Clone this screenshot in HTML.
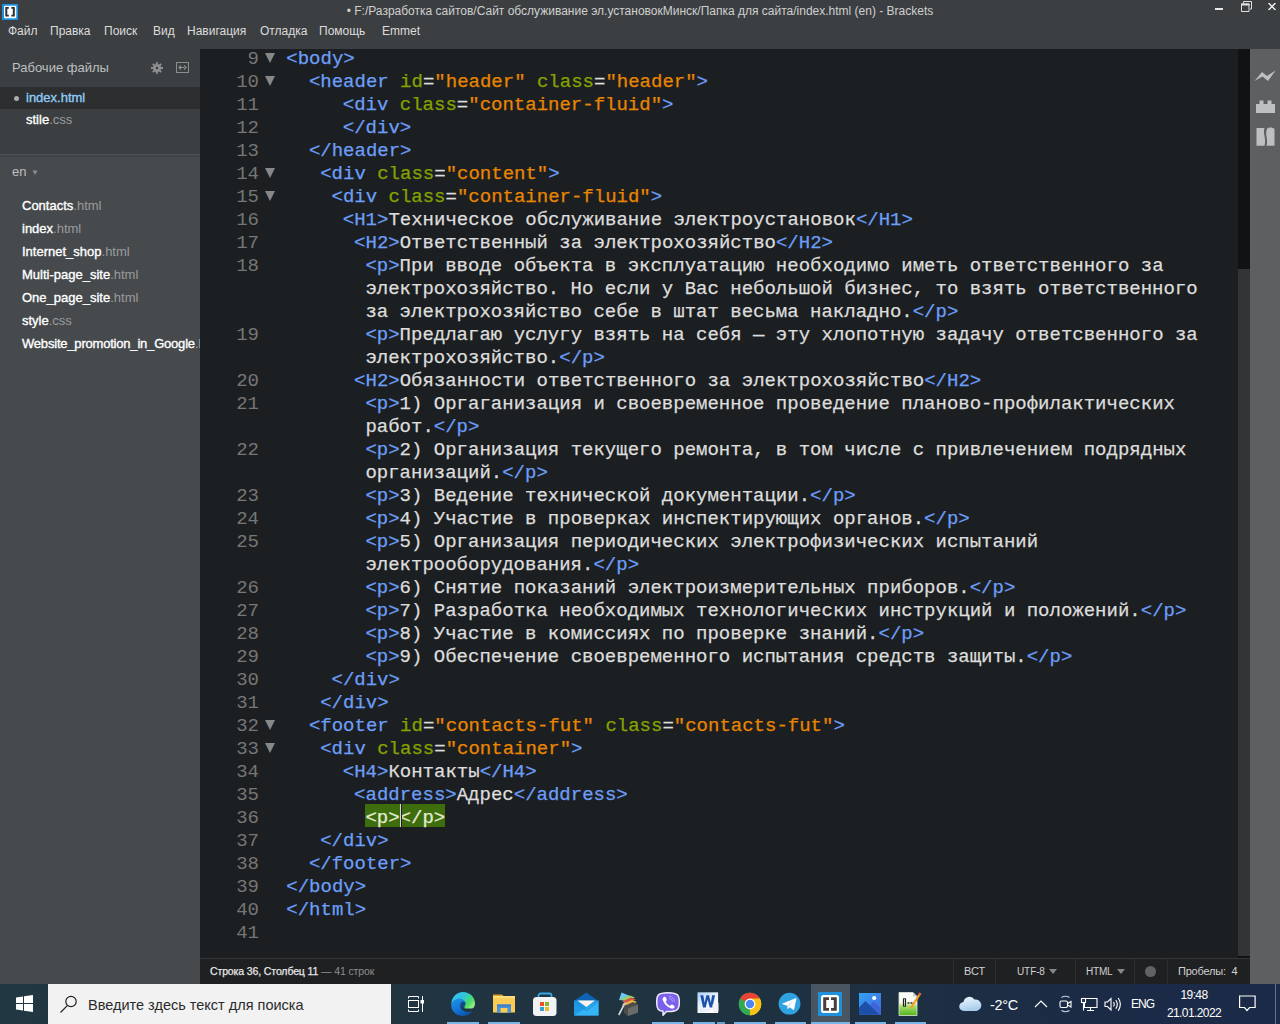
<!DOCTYPE html>
<html lang="ru">
<head>
<meta charset="utf-8">
<title>Brackets</title>
<style>
*{box-sizing:border-box;margin:0;padding:0}
html,body{width:1280px;height:1024px;overflow:hidden;background:#1c1f21;font-family:"Liberation Sans",sans-serif}
.abs{position:absolute}
#titlebar{position:absolute;left:0;top:0;width:1280px;height:49px;background:#3c3f41}
#title{position:absolute;left:0;width:1280px;top:3px;text-align:center;font-size:12px;color:#cfcfcf;line-height:16px}
.menu{position:absolute;top:23px;font-size:12px;color:#dcdcdc;line-height:16px;white-space:nowrap}
#sidebar{position:absolute;left:0;top:49px;width:200px;height:935px;background:#464a4d;overflow:hidden}
#wf{position:absolute;left:0;top:0;width:200px;height:108px;background:#3b3f42;border-bottom:2px solid #404346;box-shadow:inset 0 -1px 0 #4e5255}
#wfsel{position:absolute;left:0;top:38px;width:200px;height:22px;background:#2d2e30}
.sb{position:absolute;font-size:13px;line-height:16px;color:#fff;white-space:nowrap;-webkit-text-stroke:0.35px #fff}
.sb b{font-weight:normal;color:#9a9c9d;-webkit-text-stroke:0}
#editor{position:absolute;left:200px;top:49px;width:1050px;height:909px;background:#1c1f21;overflow:hidden}
#codewrap{position:absolute;left:-200px;top:-49px;width:1280px;height:1024px}
.ln{position:absolute;left:200px;width:59px;text-align:right;font-family:"Liberation Mono",monospace;font-size:19px;line-height:23px;color:#767676}
.fold{position:absolute;left:265px;width:0;height:0;border-left:5.5px solid transparent;border-right:5.5px solid transparent;border-top:10px solid #858788}
.cl{position:absolute;font-family:"Liberation Mono",monospace;font-size:19px;line-height:23px;white-space:pre;color:#ddd;-webkit-text-stroke:0.25px currentColor}
.t{color:#6c9ef8}.a{color:#85a300}.s{color:#e88501}.x{color:#ddd}
.m{color:#e4ecd2}
.hl{position:absolute;height:23px;background:#3d6d0d}
.cur{display:inline-block;position:relative;z-index:2;top:-3px;width:1px;height:23px;background:#d8d8d8;vertical-align:top;margin-top:0;margin-right:-1px;box-shadow:1px 0 0 #1d1f21}
#vscroll{position:absolute;left:1238px;top:49px;width:12px;height:909px;background:#111213}
#vthumb{position:absolute;left:0;top:220px;width:12px;height:687px;background:#333435}
#rtool{position:absolute;left:1250px;top:49px;width:30px;height:935px;background:#5d5f60}
#status{position:absolute;left:200px;top:958px;width:1050px;height:26px;background:#1f2022;border-top:1px solid #343537}
.st{position:absolute;top:6px;font-size:11px;line-height:13px;color:#d0d0d0;white-space:nowrap}
.tri{position:absolute;width:0;height:0;border-left:4px solid transparent;border-right:4px solid transparent;border-top:5px solid #858788}
.sep{position:absolute;top:0;width:1px;height:26px;background:#2c2d2f}
#taskbar{position:absolute;left:0;top:984px;width:1280px;height:40px;background:linear-gradient(90deg,#213742 0%,#1f3340 50%,#1d2f42 70%,#1b2b46 85%,#1b2a48 100%)}
#search{position:absolute;left:48px;top:0;width:343px;height:40px;background:#f2f2f2}
#search span{position:absolute;left:40px;top:12px;font-size:14.5px;line-height:18px;color:#2b2b2b}
.ul{position:absolute;top:38px;height:2px;background:#79b5e6}
.tray{position:absolute;color:#fff;font-size:14px;line-height:16px;white-space:nowrap}
</style>
</head>
<body>
<div id="titlebar">
  <svg class="abs" style="left:2px;top:4px" width="16" height="16" viewBox="0 0 16 16"><rect width="16" height="16" fill="#1f8fe0"/><rect x="2" y="1.800" width="12.300" height="12.400" rx="1.200" fill="#fff"/><path d="M3.300 3h3.500v1.800H5.300v5.900h1.500v1.800H3.300z" fill="#2a2f38"/><path d="M12.800 3H9.300v1.800h1.500v5.900H9.300v1.800h3.500z" fill="#2a2f38"/></svg>
  <div id="title">• F:/Разработка сайтов/Сайт обслуживание эл.установокМинск/Папка для сайта/index.html (en) - Brackets</div>
  <div class="abs" style="left:1215px;top:8px;width:8px;height:2px;background:#e6e6e6"></div>
  <svg class="abs" style="left:1241px;top:1px" width="11" height="11" viewBox="0 0 11 11" fill="none" stroke="#e0e0e0" stroke-width="1"><path d="M0.500 3v7.500h7.500V3z"/><path d="M0 3.500h8.500" stroke-width="2"/><path d="M2.500 2V0.500h8V8H9"/></svg>
  <svg class="abs" style="left:1268px;top:3px" width="8" height="7" viewBox="0 0 8 7" stroke="#f0f0f0" stroke-width="1.500"><path d="M0.500 0l7 7M7.500 0l-7 7"/></svg>
  <div class="menu" style="left:8px">Файл</div>
  <div class="menu" style="left:50px">Правка</div>
  <div class="menu" style="left:104px">Поиск</div>
  <div class="menu" style="left:153px">Вид</div>
  <div class="menu" style="left:187px">Навигация</div>
  <div class="menu" style="left:260px">Отладка</div>
  <div class="menu" style="left:319px">Помощь</div>
  <div class="menu" style="left:382px">Emmet</div>
</div>

<div id="sidebar">
  <div id="wf">
    <div class="sb" style="left:12px;top:11px;font-size:13px;color:#bdbfc0;-webkit-text-stroke:0">Рабочие файлы</div>
    <svg class="abs" style="left:151px;top:13px" width="12" height="12" viewBox="0 0 12 12"><circle cx="6" cy="6" r="2.700" fill="none" stroke="#8c8e8f" stroke-width="2.800"/><g stroke="#8c8e8f" stroke-width="1.800"><path d="M6 0v2.200M6 9.800V12M0 6h2.200M9.800 6H12M1.800 1.800l1.500 1.500M8.700 8.700l1.500 1.500M10.200 1.800L8.700 3.300M3.300 8.700l-1.500 1.500"/></g></svg>
    <svg class="abs" style="left:176px;top:13px" width="13" height="11" viewBox="0 0 13 11"><rect x="0.500" y="0.500" width="12" height="10" fill="none" stroke="#8c8e8f" stroke-width="1"/><path d="M2 5.500l3-2.500v5zM11 5.500l-3-2.500v5zM4 5h5v1H4z" fill="#8c8e8f"/></svg>
    <div id="wfsel"></div>
    <div class="abs" style="left:14px;top:47px;width:5px;height:5px;border-radius:50%;background:#a9abac"></div>
    <div class="sb" style="left:26px;top:41px;color:#8fcbf5;-webkit-text-stroke:0.35px #8fcbf5">index.html</div>
    <div class="sb" style="left:26px;top:63px">stile<b>.css</b></div>
  </div>
  <div class="sb" style="left:12px;top:115px;color:#bdbfc0;-webkit-text-stroke:0">en <span style="font-size:8px;color:#8c8e8f;position:relative;top:-1px;left:1px">▼</span></div>
  <div class="sb" style="left:22px;top:149px">Contacts<b>.html</b></div>
  <div class="sb" style="left:22px;top:172px">index<b>.html</b></div>
  <div class="sb" style="left:22px;top:195px">Internet_shop<b>.html</b></div>
  <div class="sb" style="left:22px;top:218px">Multi-page_site<b>.html</b></div>
  <div class="sb" style="left:22px;top:241px">One_page_site<b>.html</b></div>
  <div class="sb" style="left:22px;top:264px">style<b>.css</b></div>
  <div class="sb" style="left:22px;top:287px;letter-spacing:-0.2px">Website_promotion_in_Google<b>.html</b></div>
</div>

<div id="editor"><div id="codewrap">
<div class="ln" style="top:48px">9</div>
<div class="fold" style="top:53px"></div>
<div class="cl" style="top:48px;left:286.3px"><span class="t">&lt;body&gt;</span></div>
<div class="ln" style="top:71px">10</div>
<div class="fold" style="top:76px"></div>
<div class="cl" style="top:71px;left:308.9px"><span class="t">&lt;header </span><span class="a">id</span><span class="x">=</span><span class="s">"header"</span><span class="x"> </span><span class="a">class</span><span class="x">=</span><span class="s">"header"</span><span class="t">&gt;</span></div>
<div class="ln" style="top:94px">11</div>
<div class="cl" style="top:94px;left:342.8px"><span class="t">&lt;div </span><span class="a">class</span><span class="x">=</span><span class="s">"container-fluid"</span><span class="t">&gt;</span></div>
<div class="ln" style="top:117px">12</div>
<div class="cl" style="top:117px;left:342.8px"><span class="t">&lt;/div&gt;</span></div>
<div class="ln" style="top:140px">13</div>
<div class="cl" style="top:140px;left:308.9px"><span class="t">&lt;/header&gt;</span></div>
<div class="ln" style="top:163px">14</div>
<div class="fold" style="top:168px"></div>
<div class="cl" style="top:163px;left:320.2px"><span class="t">&lt;div </span><span class="a">class</span><span class="x">=</span><span class="s">"content"</span><span class="t">&gt;</span></div>
<div class="ln" style="top:186px">15</div>
<div class="fold" style="top:191px"></div>
<div class="cl" style="top:186px;left:331.5px"><span class="t">&lt;div </span><span class="a">class</span><span class="x">=</span><span class="s">"container-fluid"</span><span class="t">&gt;</span></div>
<div class="ln" style="top:209px">16</div>
<div class="cl" style="top:209px;left:342.8px"><span class="t">&lt;H1&gt;</span><span class="x">Техническое обслуживание электроустановок</span><span class="t">&lt;/H1&gt;</span></div>
<div class="ln" style="top:232px">17</div>
<div class="cl" style="top:232px;left:354.1px"><span class="t">&lt;H2&gt;</span><span class="x">Ответственный за электрохозяйство</span><span class="t">&lt;/H2&gt;</span></div>
<div class="ln" style="top:255px">18</div>
<div class="cl" style="top:255px;left:365.4px"><span class="t">&lt;p&gt;</span><span class="x">При вводе объекта в эксплуатацию необходимо иметь ответственного за</span></div>
<div class="cl" style="top:278px;left:365.4px"><span class="x">электрохозяйство. Но если у Вас небольшой бизнес, то взять ответственного</span></div>
<div class="cl" style="top:301px;left:365.4px"><span class="x">за электрохозяйство себе в штат весьма накладно.</span><span class="t">&lt;/p&gt;</span></div>
<div class="ln" style="top:324px">19</div>
<div class="cl" style="top:324px;left:365.4px"><span class="t">&lt;p&gt;</span><span class="x">Предлагаю услугу взять на себя — эту хлопотную задачу ответсвенного за</span></div>
<div class="cl" style="top:347px;left:365.4px"><span class="x">электрохозяйство.</span><span class="t">&lt;/p&gt;</span></div>
<div class="ln" style="top:370px">20</div>
<div class="cl" style="top:370px;left:354.1px"><span class="t">&lt;H2&gt;</span><span class="x">Обязанности ответственного за электрохозяйство</span><span class="t">&lt;/H2&gt;</span></div>
<div class="ln" style="top:393px">21</div>
<div class="cl" style="top:393px;left:365.4px"><span class="t">&lt;p&gt;</span><span class="x">1) Оргаганизация и своевременное проведение планово-профилактических</span></div>
<div class="cl" style="top:416px;left:365.4px"><span class="x">работ.</span><span class="t">&lt;/p&gt;</span></div>
<div class="ln" style="top:439px">22</div>
<div class="cl" style="top:439px;left:365.4px"><span class="t">&lt;p&gt;</span><span class="x">2) Организация текущего ремонта, в том числе с привлечением подрядных</span></div>
<div class="cl" style="top:462px;left:365.4px"><span class="x">организаций.</span><span class="t">&lt;/p&gt;</span></div>
<div class="ln" style="top:485px">23</div>
<div class="cl" style="top:485px;left:365.4px"><span class="t">&lt;p&gt;</span><span class="x">3) Ведение технической документации.</span><span class="t">&lt;/p&gt;</span></div>
<div class="ln" style="top:508px">24</div>
<div class="cl" style="top:508px;left:365.4px"><span class="t">&lt;p&gt;</span><span class="x">4) Участие в проверках инспектирующих органов.</span><span class="t">&lt;/p&gt;</span></div>
<div class="ln" style="top:531px">25</div>
<div class="cl" style="top:531px;left:365.4px"><span class="t">&lt;p&gt;</span><span class="x">5) Организация периодических электрофизических испытаний</span></div>
<div class="cl" style="top:554px;left:365.4px"><span class="x">электрооборудования.</span><span class="t">&lt;/p&gt;</span></div>
<div class="ln" style="top:577px">26</div>
<div class="cl" style="top:577px;left:365.4px"><span class="t">&lt;p&gt;</span><span class="x">6) Снятие показаний электроизмерительных приборов.</span><span class="t">&lt;/p&gt;</span></div>
<div class="ln" style="top:600px">27</div>
<div class="cl" style="top:600px;left:365.4px"><span class="t">&lt;p&gt;</span><span class="x">7) Разработка необходимых технологических инструкций и положений.</span><span class="t">&lt;/p&gt;</span></div>
<div class="ln" style="top:623px">28</div>
<div class="cl" style="top:623px;left:365.4px"><span class="t">&lt;p&gt;</span><span class="x">8) Участие в комиссиях по проверке знаний.</span><span class="t">&lt;/p&gt;</span></div>
<div class="ln" style="top:646px">29</div>
<div class="cl" style="top:646px;left:365.4px"><span class="t">&lt;p&gt;</span><span class="x">9) Обеспечение своевременного испытания средств защиты.</span><span class="t">&lt;/p&gt;</span></div>
<div class="ln" style="top:669px">30</div>
<div class="cl" style="top:669px;left:331.5px"><span class="t">&lt;/div&gt;</span></div>
<div class="ln" style="top:692px">31</div>
<div class="cl" style="top:692px;left:320.2px"><span class="t">&lt;/div&gt;</span></div>
<div class="ln" style="top:715px">32</div>
<div class="fold" style="top:720px"></div>
<div class="cl" style="top:715px;left:308.9px"><span class="t">&lt;footer </span><span class="a">id</span><span class="x">=</span><span class="s">"contacts-fut"</span><span class="x"> </span><span class="a">class</span><span class="x">=</span><span class="s">"contacts-fut"</span><span class="t">&gt;</span></div>
<div class="ln" style="top:738px">33</div>
<div class="fold" style="top:743px"></div>
<div class="cl" style="top:738px;left:320.2px"><span class="t">&lt;div </span><span class="a">class</span><span class="x">=</span><span class="s">"container"</span><span class="t">&gt;</span></div>
<div class="ln" style="top:761px">34</div>
<div class="cl" style="top:761px;left:342.8px"><span class="t">&lt;H4&gt;</span><span class="x">Контакты</span><span class="t">&lt;/H4&gt;</span></div>
<div class="ln" style="top:784px">35</div>
<div class="cl" style="top:784px;left:354.1px"><span class="t">&lt;address&gt;</span><span class="x">Адрес</span><span class="t">&lt;/address&gt;</span></div>
<div class="ln" style="top:807px">36</div>
<div class="hl" style="top:804px;left:365.0px;width:79.8px"></div>
<div class="cl" style="top:807px;left:365.4px"><span class="m">&lt;p&gt;</span><i class="cur"></i><span class="m">&lt;/p&gt;</span></div>
<div class="ln" style="top:830px">37</div>
<div class="cl" style="top:830px;left:320.2px"><span class="t">&lt;/div&gt;</span></div>
<div class="ln" style="top:853px">38</div>
<div class="cl" style="top:853px;left:308.9px"><span class="t">&lt;/footer&gt;</span></div>
<div class="ln" style="top:876px">39</div>
<div class="cl" style="top:876px;left:286.3px"><span class="t">&lt;/body&gt;</span></div>
<div class="ln" style="top:899px">40</div>
<div class="cl" style="top:899px;left:286.3px"><span class="t">&lt;/html&gt;</span></div>
<div class="ln" style="top:922px">41</div>
</div></div>

<div id="vscroll"><div id="vthumb"></div></div>

<div id="rtool">
  <svg class="abs" style="left:4px;top:20px" width="22" height="14" viewBox="0 0 22 14"><path d="M0.500 12L8 3l5 4L21.500 1.500 14 12 8.500 7.500z" fill="#bdbfc0"/></svg>
  <svg class="abs" style="left:6px;top:50px" width="19" height="14" viewBox="0 0 19 14"><path d="M0 5h3.500V1.500h4V5h4V1.500h4V5H19v9H0z" fill="#bdbfc0"/></svg>
  <svg class="abs" style="left:6px;top:78px" width="19" height="21" viewBox="0 0 19 19" preserveAspectRatio="none"><path d="M0.500 1h8c-2 5 2 9 0 16H0.500zM11 1.500c3-2 5-1 7.500 0V17h-8c2-6-2-10 0.500-15.500z" fill="#bdbfc0"/></svg>
</div>

<div id="status">
  <div class="st" style="left:10px;font-size:10.5px;letter-spacing:-0.12px"><span style="color:#e6e6e6;-webkit-text-stroke:0.25px #e6e6e6">Строка 36, Столбец 11</span><span style="color:#8d8f90"> — 41 строк</span></div>
  <div class="sep" style="left:753px"></div>
  <div class="st" style="left:764px">ВСТ</div>
  <div class="sep" style="left:795px"></div>
  <div class="st" style="left:817px;font-size:10px;letter-spacing:-0.1px">UTF-8</div><div class="tri" style="left:849px;top:10px"></div>
  <div class="sep" style="left:875px"></div>
  <div class="st" style="left:886px;font-size:10px;letter-spacing:-0.2px">HTML</div><div class="tri" style="left:917px;top:10px"></div>
  <div class="sep" style="left:934px"></div>
  <div class="abs" style="left:945px;top:7px;width:11px;height:11px;border-radius:50%;background:#606263"></div>
  <div class="sep" style="left:967px"></div>
  <div class="st" style="left:978px;letter-spacing:-0.2px">Пробелы:&nbsp; 4</div>
</div>

<div id="taskbar">
  <svg class="abs" style="left:16px;top:11px" width="17" height="17" viewBox="0 0 17 17" fill="#fff"><path d="M0 2.400L7 1.400V8H0zM8 1.250L17 0v8H8zM0 9h7v6.600L0 14.600zM8 9h9v8L8 15.750z"/></svg>
  <div id="search">
    <svg class="abs" style="left:12px;top:11px" width="18" height="18" viewBox="0 0 18 18" fill="none" stroke="#222" stroke-width="1.200"><circle cx="11" cy="6.500" r="5.200"/><path d="M7.500 10.300L0.500 17.500"/></svg>
    <span>Введите здесь текст для поиска</span>
  </div>
  <div class="abs" style="left:811px;top:0;width:39px;height:40px;background:#495662"></div>
  <!-- task view -->
  <svg class="abs" style="left:407px;top:11px" width="18" height="18" viewBox="0 0 18 18" fill="none" stroke="#fff" stroke-width="1"><path d="M1.500 3.500v-2h10v2"/><rect x="1.500" y="5.500" width="10" height="7"/><path d="M1.500 14.500v2h10v-2"/><path d="M15.500 1v16"/><rect x="13.500" y="5" width="3.500" height="3.500" fill="#fff" stroke="none"/></svg>
  <!-- edge -->
  <svg class="abs" style="left:451px;top:8px" width="24" height="24" viewBox="0 0 24 24"><defs><linearGradient id="eg1" x1="0" y1="0" x2="1" y2="0.600"><stop offset="0" stop-color="#3bbcf3"/><stop offset="0.480" stop-color="#2fc4dc"/><stop offset="0.700" stop-color="#3fd39a"/><stop offset="0.860" stop-color="#50dc60"/><stop offset="1" stop-color="#8aec80"/></linearGradient><linearGradient id="eg2" x1="0.100" y1="0" x2="0.700" y2="1"><stop offset="0" stop-color="#1d94ea"/><stop offset="0.500" stop-color="#1478d8"/><stop offset="1" stop-color="#0b51ac"/></linearGradient></defs><path d="M0.300 12C0.500 5 5.500 0 12 0c6.800 0 12 5 12 11.500 0 3-1.500 5-3.500 5h-6.800c-0.900-1.200-0.600-2.600 0.400-3.600C13.500 8.500 8.500 6.500 5 8 2.500 9 1 10.500 0.300 12z" fill="url(#eg1)"/><path d="M0.300 12C-0.500 18.500 4.800 24 12 24c4 0 7.300-1.900 9.200-4.900-3.200 1.500-7.400 1.200-9.900-1-2.300-2-2.600-5.300-0.900-7.300 1-1.200 2.400-1.600 3.400-1.300C12 6.300 7.500 5.800 4.300 7.700 2.300 8.900 0.800 10.300 0.300 12z" fill="url(#eg2)"/><path d="M10.500 10.800c1-1.200 2.300-1.600 3.300-1.300 0.900 1.100 1.100 2.500 0.400 3.400-1 1-1.300 2.400-0.400 3.600l-1 0.500c-3-1.200-3.800-4.200-2.300-6.200z" fill="#154a86"/></svg>
  <!-- explorer -->
  <svg class="abs" style="left:493px;top:10px" width="22" height="19" viewBox="0 0 22 19"><path d="M0 0.500h9l2 2H0z" fill="#e0a020"/><rect x="0" y="2" width="22" height="16.500" fill="#f9cd55"/><rect x="0" y="2" width="22" height="2" fill="#fbdc7c"/><path d="M4 10.500h14v8H4z" fill="#4a92dc"/><path d="M4 10.500h14v2H4z" fill="#3b7fc8"/><path d="M7.500 14h7v4.500h-7z" fill="#f9cd55"/></svg>
  <!-- store -->
  <svg class="abs" style="left:533px;top:8px" width="24" height="24" viewBox="0 0 24 24"><path d="M5.500 6V3.500a2 2 0 0 1 2-2h9a2 2 0 0 1 2 2V6" fill="none" stroke="#35a7e3" stroke-width="1.800"/><rect x="0" y="5" width="23.500" height="19" rx="3.500" fill="#f1f3f5"/><rect x="7" y="10" width="4" height="4" fill="#f04e23"/><rect x="12" y="10" width="4" height="4" fill="#7fba2a"/><rect x="7" y="15" width="4" height="4" fill="#2fa3dd"/><rect x="12" y="15" width="4" height="4" fill="#f5b82e"/></svg>
  <!-- mail -->
  <svg class="abs" style="left:574px;top:8px" width="25" height="24" viewBox="0 0 25 24"><path d="M12.300 0.500L24.500 9H0z" fill="#0f63b5"/><rect x="0" y="8.500" width="24.500" height="15" fill="#1e9be6"/><path d="M0 23.500L24.500 8.500v15z" fill="#34b4f4"/><path d="M3.500 8.500h17.500L12.300 15z" fill="#fdf3ea"/><path d="M0 8.500L12.300 17.500 24.500 8.500v1.500L12.300 19 0 10z" fill="#1a84d0" opacity="0.600"/></svg>
  <!-- winrar -->
  <svg class="abs" style="left:617px;top:8px" width="22" height="24" viewBox="0 0 22 24"><path d="M2 8L4.500 0.500 13 4 11 9z" fill="#6cc9ea"/><path d="M4 7l9-3.500 5 2-9 4z" fill="#9fd05a"/><path d="M5 9.500l9-4 5 2-9 4.200z" fill="#d9534a"/><path d="M6 12l9-4 5 2-9 4.500z" fill="#e9bb3a"/><path d="M7 14l9-4 5 2.500v8L11 24 7 21z" fill="#4c4c4c"/><path d="M11 16.500l10-4v8L11 24z" fill="#6b6b6b"/><path d="M1 22.500L7 11l1.500 0.800L2.500 23.500z" fill="#d8d8d8"/><path d="M5.500 13.500l3-3" stroke="#c8c8c8" stroke-width="1.500"/></svg>
  <!-- viber -->
  <svg class="abs" style="left:656px;top:7px" width="25" height="26" viewBox="0 0 25 26"><path d="M12 1.700c4.500 0 8 0.500 9.600 2.300 1.500 1.700 1.700 4 1.700 7s-0.200 5.600-1.700 7.200c-1.600 1.800-5 2.300-9.600 2.300h-1.500L7 24.300v-4c-2.500-0.300-4-1-4.800-2.100C0.800 16.500 0.700 14 0.700 11s0.200-5.300 1.500-7C3.800 2.200 7.500 1.700 12 1.700z" fill="#7b61e9" stroke="#efeaff" stroke-width="1.500" stroke-linejoin="round"/><path d="M7.600 6.300c0.800-0.800 1.700-0.600 2.200 0.300l0.900 1.600c0.300 0.700 0.100 1.300-0.500 1.800-0.500 0.400-0.400 0.900 0 1.600 0.800 1.300 1.700 2.200 3 2.900 0.700 0.400 1.100 0.200 1.500-0.300 0.500-0.700 1.200-0.800 1.900-0.400l1.400 0.900c0.800 0.500 0.900 1.300 0.200 2.100-0.800 0.900-1.800 1.200-3 0.700-4.300-1.800-7.300-5-8.500-8.600-0.300-1 0-1.900 0.900-2.600z" fill="#fff"/><path d="M13 5.300c3.200 0.300 5.300 2.400 5.500 5.500M13.300 7.500c1.800 0.200 3 1.400 3.100 3.200" fill="none" stroke="#b9a9ff" stroke-width="0.900"/></svg>
  <!-- word -->
  <svg class="abs" style="left:697px;top:8px" width="22" height="22" viewBox="0 0 22 22"><defs><linearGradient id="wg" x1="0" y1="0" x2="0.700" y2="1"><stop offset="0" stop-color="#a9cdf6"/><stop offset="0.450" stop-color="#e4effc"/><stop offset="1" stop-color="#ffffff"/></linearGradient></defs><rect x="0.500" y="0.300" width="20.600" height="20.700" fill="url(#wg)"/><path d="M3.300 3.200h3l1.300 7.500 1.800-7.500h2.600l1.800 7.500 1.300-7.500H18l-2.600 12.200H12.700l-2-8-2 8H6z" fill="#1d50ab"/><path d="M15.300 12.800l6.200-2v8.500l-5 1.700z" fill="#f3f0fb"/><path d="M3 17.500h11M3 19h10" stroke="#d9e2f2" stroke-width="0.600"/></svg>
  <!-- chrome -->
  <svg class="abs" style="left:738px;top:8px" width="24" height="24" viewBox="0 0 24 24"><circle cx="12" cy="12" r="11.250" fill="#34a853"/><path d="M12 12L2.260 6.375A11.250 11.250 0 0 1 21.740 6.375z" fill="#ea4335"/><path d="M2.260 6.375A11.250 11.250 0 0 1 21.740 6.375H12z" fill="#ea4335"/><path d="M21.740 6.375A11.250 11.250 0 0 1 12 23.250L12 12z" fill="#fbc116"/><path d="M12 6.375h9.740A11.250 11.250 0 0 1 12 23.250l4.870-8.440z" fill="#fbc116"/><path d="M2.260 6.375L7.130 14.800 12 23.250A11.250 11.250 0 0 1 2.260 6.375z" fill="#34a853"/><circle cx="12" cy="12" r="5.400" fill="#fff"/><circle cx="12" cy="12" r="4.200" fill="#4a86f0"/></svg>
  <!-- telegram -->
  <svg class="abs" style="left:778px;top:8px" width="23" height="23" viewBox="0 0 23 23"><circle cx="11.500" cy="11.700" r="10.900" fill="#2ea3df"/><path d="M4.500 11.500L17.500 6.300c0.600-0.200 1 0.200 0.800 0.900L16.200 17.200c-0.150 0.700-0.700 0.850-1.200 0.500l-3.200-2.400-1.600 1.500c-0.300 0.300-0.600 0.200-0.650-0.200L9.200 13.800 4.600 12.300c-0.600-0.200-0.600-0.600-0.100-0.800z" fill="#fff"/><path d="M9.200 13.800l6.800-5.300-5.400 6.100-0.400 2.200z" fill="#c8dff0"/></svg>
  <!-- brackets -->
  <svg class="abs" style="left:818px;top:8px" width="24" height="24" viewBox="0 0 24 24"><rect width="24" height="24" fill="#1f90dc"/><rect x="3" y="3" width="18" height="18" rx="2.500" fill="#fff"/><path d="M5.200 5.200h5.800v2.800H8.200v8h2.800v2.800H5.200z" fill="#4a3f38"/><path d="M18.800 5.200H13v2.800h2.800v8H13v2.800h5.800z" fill="#4a3f38"/></svg>
  <!-- photos -->
  <svg class="abs" style="left:859px;top:9px" width="22" height="22" viewBox="0 0 22 22"><defs><linearGradient id="pg" x1="0" y1="0" x2="1" y2="1"><stop offset="0" stop-color="#2fa2f2"/><stop offset="1" stop-color="#4a66e2"/></linearGradient></defs><rect width="22" height="21.600" fill="url(#pg)"/><path d="M10 13l5-4.500 7 7v6H10z" fill="#3f64d6"/><path d="M0 14.500L6.500 8 20 21.600H0z" fill="#1d4fa8"/><circle cx="15.200" cy="5" r="2.100" fill="#fff"/></svg>
  <!-- notepad -->
  <svg class="abs" style="left:898px;top:8px" width="24" height="24" viewBox="0 0 24 24"><defs><linearGradient id="ng" x1="0" y1="0" x2="0" y2="1"><stop offset="0" stop-color="#ffffff"/><stop offset="0.450" stop-color="#f4f9ee"/><stop offset="0.600" stop-color="#a8dc6a"/><stop offset="1" stop-color="#4fb41c"/></linearGradient></defs><path d="M1 0.500h14l4 4V23.500H1z" fill="url(#ng)" stroke="#dfe6d8" stroke-width="0.800"/><path d="M15 0.500v4h4z" fill="#c9cfc4"/><path d="M5.500 6.500v8M7.500 6.500v8" stroke="#222" stroke-width="1.200"/><path d="M5.500 6.700h2M5.500 14.300h2" stroke="#222" stroke-width="0.800"/><path d="M9.500 11h2M12.500 11h2" stroke="#222" stroke-width="1.400"/><path d="M21.500 0.500l1.800 1.300L14.500 15.500l-2.200 1.200 0.400-2.500z" fill="#f0a020"/><path d="M20 2.500l1.500-2 1.800 1.300-1.500 2z" fill="#e0564a"/></svg>
  <!-- underlines -->
  <div class="ul" style="left:447px;width:32px"></div>
  <div class="ul" style="left:488px;width:32px"></div>
  <div class="ul" style="left:652px;width:32px"></div>
  <div class="ul" style="left:693px;width:22px"></div><div class="ul" style="left:717px;width:8px;background:#6a9fcc"></div>
  <div class="ul" style="left:734px;width:32px"></div>
  <div class="ul" style="left:775px;width:31px"></div>
  <div class="ul" style="left:811px;width:39px"></div>
  <div class="ul" style="left:855px;width:31px"></div>
  <div class="ul" style="left:895px;width:31px"></div>
  <!-- cloud -->
  <svg class="abs" style="left:959px;top:11px" width="23" height="17" viewBox="0 0 23 17"><defs><linearGradient id="cg" x1="0" y1="0" x2="0.300" y2="1"><stop offset="0" stop-color="#f2f9ff"/><stop offset="1" stop-color="#a9cdec"/></linearGradient></defs><path d="M5 16a4.500 4.500 0 0 1-0.500-9A6 6 0 0 1 15.500 4.500 5.800 5.800 0 0 1 17.500 16z" fill="url(#cg)"/></svg>
  <div class="tray" style="left:990px;top:13px;font-size:14.500px;letter-spacing:-0.300px">-2°C</div>
  <!-- chevron -->
  <svg class="abs" style="left:1034px;top:16px" width="14" height="8" viewBox="0 0 14 8" fill="none" stroke="#fff" stroke-width="1.200"><path d="M1 7l6-6 6 6"/></svg>
  <!-- camera -->
  <svg class="abs" style="left:1059px;top:11px" width="13" height="18" viewBox="0 0 13 18" fill="none" stroke="#fff" stroke-width="1.100"><rect x="1" y="6" width="7.500" height="6.500" rx="1.500"/><path d="M8.500 8.500l3.500-2v5.500l-3.500-2"/><path d="M2.500 2.500q4-2.500 8 0M2.500 15.500q4 2.500 8 0" stroke="#c8d0dc"/></svg>
  <!-- network -->
  <svg class="abs" style="left:1080px;top:13px" width="18" height="15" viewBox="0 0 18 15" fill="none" stroke="#fff" stroke-width="1.100"><path d="M5.500 1.500h11.500v9H4.500V6"/><path d="M10.500 10.500v3M7 13.500h7"/><rect x="1.500" y="1.500" width="4" height="4"/><path d="M3.500 5.500v8"/></svg>
  <!-- volume -->
  <svg class="abs" style="left:1104px;top:13px" width="18" height="15" viewBox="0 0 18 15" fill="none" stroke="#fff" stroke-width="1.100"><path d="M1 5h2.500l3.500-3.500v11.500L3.500 9.500H1z"/><path d="M9.500 5q1.500 2.200 0 4.500M11.800 3q3 4.200 0 8.700M14.200 1q4.300 6.200 0 12.700"/></svg>
  <div class="tray" style="left:1131px;top:12px;font-size:12px;letter-spacing:-0.900px">ENG</div>
  <div class="tray" style="left:1165px;top:3px;width:58px;text-align:center;font-size:12px;letter-spacing:-0.600px">19:48</div>
  <div class="tray" style="left:1160px;top:21px;width:68px;text-align:center;font-size:12px;letter-spacing:-0.600px">21.01.2022</div>
  <!-- notification -->
  <svg class="abs" style="left:1239px;top:11px" width="17" height="17" viewBox="0 0 17 17" fill="none" stroke="#fff" stroke-width="1.200"><path d="M0.600 1h15.500v11.500h-5.500L8 15.500 5.500 12.500H0.600z"/></svg>
  <div class="abs" style="left:1275px;top:0;width:1px;height:40px;background:#66758a"></div>

</div>
</body>
</html>
